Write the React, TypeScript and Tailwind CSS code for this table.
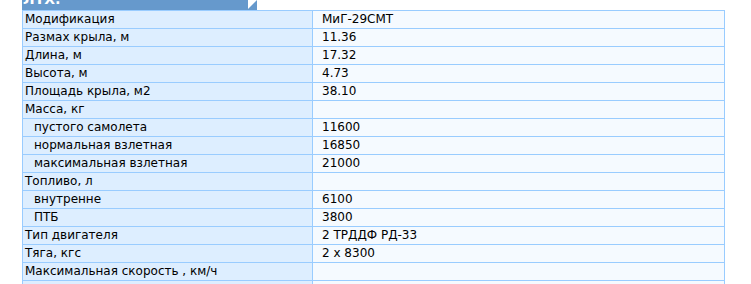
const rows: { label: string; value: string; sub?: boolean }[] = [
  { label: "Модификация", value: "МиГ-29СМТ" },
  { label: "Размах крыла, м", value: "11.36" },
  { label: "Длина, м", value: "17.32" },
  { label: "Высота, м", value: "4.73" },
  { label: "Площадь крыла, м2", value: "38.10" },
  { label: "Масса, кг", value: "" },
  { label: "пустого самолета", value: "11600", sub: true },
  { label: "нормальная взлетная", value: "16850", sub: true },
  { label: "максимальная взлетная", value: "21000", sub: true },
  { label: "Топливо, л", value: "" },
  { label: "внутренне", value: "6100", sub: true },
  { label: "ПТБ", value: "3800", sub: true },
  { label: "Тип двигателя", value: "2 ТРДДФ РД-33" },
  { label: "Тяга, кгс", value: "2 x 8300" },
  { label: "Максимальная скорость , км/ч", value: "" },
  { label: "", value: "", sub: true },
];

export default function App() {
  return (
    <div className="h-[284px] w-[751px] overflow-hidden bg-white pl-[22px] font-['DejaVu_Sans',Verdana,sans-serif] text-[12px] text-black">
      <div className="relative h-[10px] w-[235px] overflow-hidden">
        <div className="h-[10px] w-[226px] bg-[#6699cc]" />
        <div className="absolute left-[225px] top-0 h-0 w-0 border-b-[10px] border-l-[10px] border-b-[#6699cc] border-l-transparent" />
        <div className="absolute left-[1px] top-[-9px] text-[14px] font-bold leading-[16px] text-white">
          ЛТХ:
        </div>
      </div>
      <table className="w-[703px] border-collapse">
        <tbody>
          {rows.map((r, i) => (
            <tr key={i} className="h-[18px]">
              <td
                className={`w-[290px] border border-[#99ccff] bg-[#ddeeff] py-0 leading-[17px] ${
                  r.sub ? "pl-[11px]" : "pl-[2px]"
                }`}
              >
                {r.label}
              </td>
              <td className="border border-[#99ccff] bg-[#f5faff] py-0 pl-[9px] leading-[17px]">
                {r.value}
              </td>
            </tr>
          ))}
        </tbody>
      </table>
    </div>
  );
}
